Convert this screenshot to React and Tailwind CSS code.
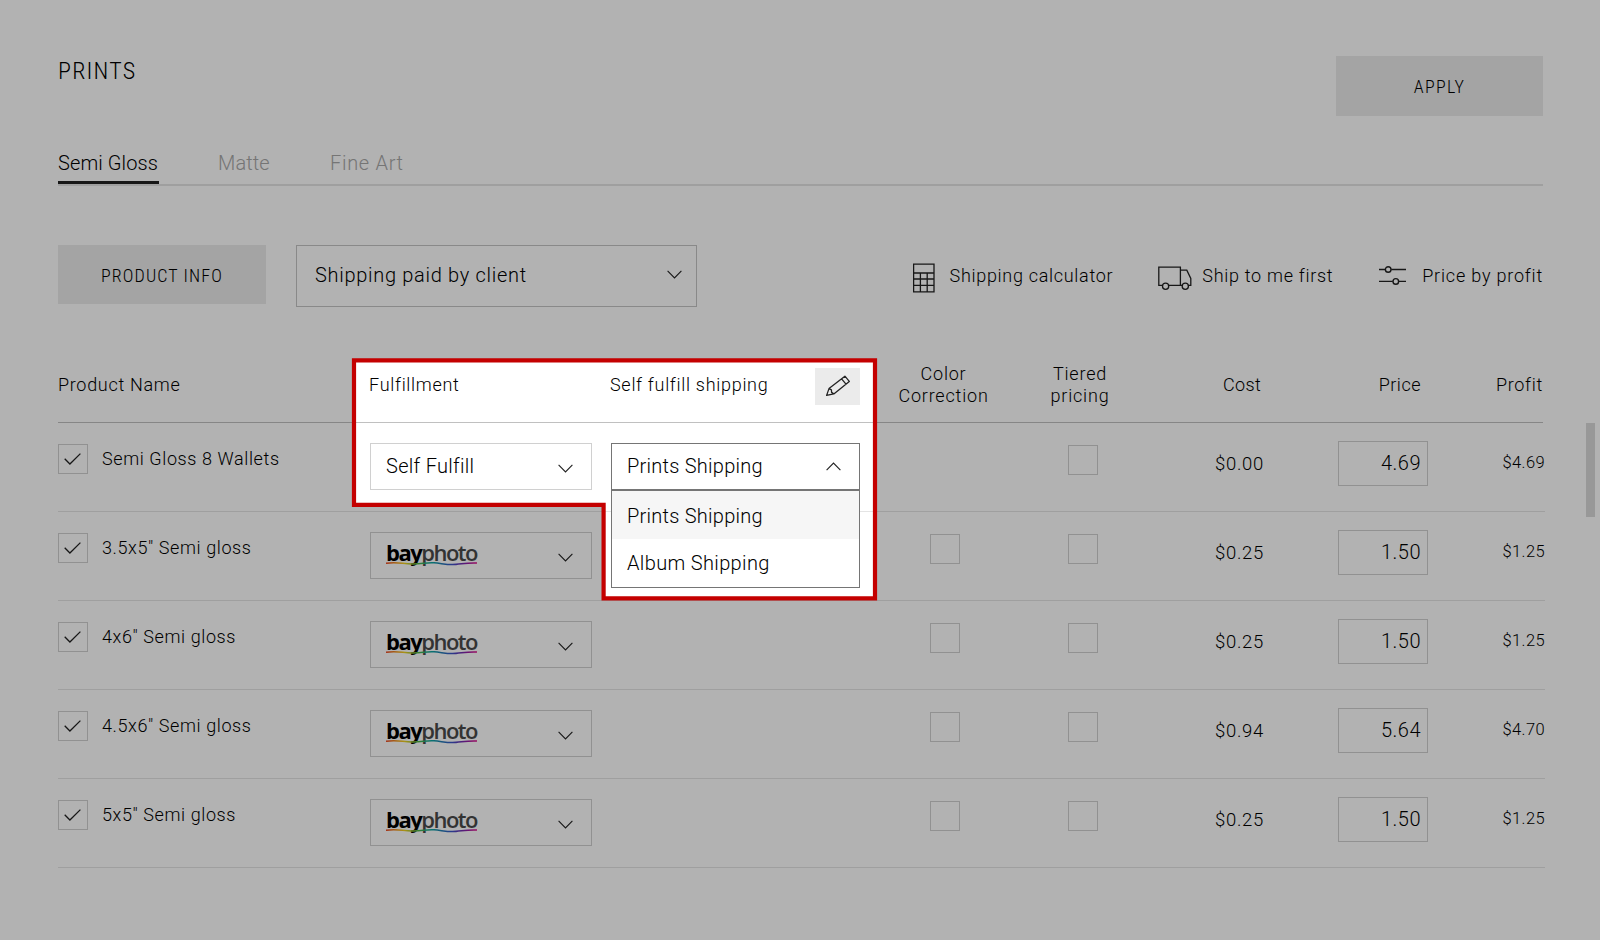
import React from 'react';

const products = [
  { name: 'Semi Gloss 8 Wallets', lab: 'self', correction: false, cost: '$0.00', price: '4.69', profit: '$4.69' },
  { name: '3.5x5" Semi gloss', lab: 'bayphoto', correction: true, cost: '$0.25', price: '1.50', profit: '$1.25' },
  { name: '4x6" Semi gloss', lab: 'bayphoto', correction: true, cost: '$0.25', price: '1.50', profit: '$1.25' },
  { name: '4.5x6" Semi gloss', lab: 'bayphoto', correction: true, cost: '$0.94', price: '5.64', profit: '$4.70' },
  { name: '5x5" Semi gloss', lab: 'bayphoto', correction: true, cost: '$0.25', price: '1.50', profit: '$1.25' },
];

const columns = 'grid grid-cols-[312px_241px_253px_162px_114px_124px_164px_117px]';

const Chevron = ({ up, className = '' }) => (
  <svg className={`h-[9px] w-[15px] shrink-0 ${className}`} viewBox="0 0 15 9" fill="none" stroke="#222" strokeWidth="1.1">
    <path d={up ? 'M.6 8.2 7.5 1l6.9 7.2' : 'M.6.8 7.5 8l6.9-7.2'} />
  </svg>
);

const CalculatorIcon = () => (
  <svg className="mt-1 h-[30px] w-[22px]" viewBox="0 0 22 30" fill="none" stroke="#222" strokeWidth="1.3">
    <path d="M.6 1.2h20.4v27.6H.6zM.6 10h20.4M.6 16h20.4M.6 22.3h20.4M7.4 10v18.8M14.2 10v18.8" />
  </svg>
);

const TruckIcon = () => (
  <svg className="mt-1 h-6 w-[34px]" viewBox="0 0 34 24" fill="none" stroke="#222" strokeWidth="1.3">
    <path d="M4.4 19.4H.8V1.2h21.6v18.2H10.8M22.4 4.2h6.4l4 8.2v7h-2.4M22.4 19.4h1.8" />
    <circle cx="7.6" cy="20.2" r="3.1" />
    <circle cx="27.3" cy="20.2" r="3.1" />
  </svg>
);

const SlidersIcon = () => (
  <svg className="-mt-0.5 h-[19px] w-[27px]" viewBox="0 0 27 19" fill="none" stroke="#222" strokeWidth="1.4">
    <path d="M0 3.5h6.2M12.2 3.5H27M0 15.4h13.8M19.8 15.4H27" />
    <circle cx="9.2" cy="3.5" r="2.8" />
    <circle cx="16.8" cy="15.4" r="2.8" />
  </svg>
);

const PencilIcon = () => (
  <svg className="-mt-0.5 h-[22px] w-6" viewBox="0 0 24 22" fill="none" stroke="#222" strokeWidth="1.3" strokeLinejoin="round">
    <path d="M.6 20.4l2.4-6.8L18.9 1.2l4.4 5.2L7.8 18.9zM3 13.6l2.4 1.2.2 2.6 2.2 1.5M15.6 3.8l4.4 5.3" />
  </svg>
);

const Checkbox = ({ checked }) => (
  <span className="flex size-[30px] shrink-0 items-center justify-center border border-[#d0d0d0]">
    {checked && (
      <svg className="-ml-0.5 h-3 w-[17px]" viewBox="0 0 17 12" fill="none" stroke="#222" strokeWidth="1.3">
        <path d="M.7 5.8 5.9 11 16.4.6" />
      </svg>
    )}
  </span>
);

const BayPhotoLogo = () => (
  <span className="relative -mt-[7px] block h-6 w-[91px] whitespace-nowrap font-['Open_Sans',sans-serif] text-[22px] leading-6 tracking-[-1.5px] text-[#4a4a4a]">
    <span className="font-bold text-black">bay</span>
    <span className="font-semibold">photo</span>
    <svg className="absolute left-0 top-[21px] h-1.5 w-[91px]" viewBox="0 0 91 6" fill="none">
      <defs>
        <linearGradient id="rainbow">
          <stop offset="0" stopColor="#e8431f" />
          <stop offset=".2" stopColor="#f5d21f" />
          <stop offset=".36" stopColor="#4cb748" />
          <stop offset=".5" stopColor="#0ea5a0" />
          <stop offset=".72" stopColor="#3a55c8" />
          <stop offset=".88" stopColor="#8a1fa8" />
          <stop offset="1" stopColor="#e0108a" />
        </linearGradient>
      </defs>
      <path d="M0 2.2C12 .6 16 2.8 26 3S40 1.2 48 1.8s14 2.4 22 1.6 12-1.8 21-1.4" stroke="url(#rainbow)" strokeWidth="1.6" />
    </svg>
  </span>
);

const FulfillmentSelect = ({ lab }) => (
  <div className="mt-5 flex h-[47px] w-[222px] items-center justify-between border border-[#d0d0d0] pl-[15px] pr-[18px]">
    {lab === 'self' ? (
      <span className="-mt-0.5 text-xl tracking-[0.3px]">Self Fulfill</span>
    ) : (
      <BayPhotoLogo />
    )}
    <Chevron className="mt-1" />
  </div>
);

const ShippingSelect = () => (
  <div className="relative mt-5 w-[249px] text-xl tracking-[0.25px]">
    <div className="flex h-[47px] items-center justify-between border border-[#757575] bg-white pl-[15px] pr-[18px]">
      <span className="-mt-0.5">Prints Shipping</span>
      <Chevron up />
    </div>
    <ul className="absolute left-0 top-[46px] z-10 w-full border border-t-2 border-[#757575] bg-white">
      <li className="flex h-12 items-center bg-[#f6f6f6] px-[15px] pt-0.5">Prints Shipping</li>
      <li className="flex h-12 items-center px-[15px] tracking-[0.35px]">Album Shipping</li>
    </ul>
  </div>
);

const ProductRow = ({ product }) => (
  <div className={`${columns} h-[89px] items-start border-b border-[#e4e4e4]`}>
    <div className="mt-[21px] flex items-center gap-3.5">
      <Checkbox checked />
      <span className="tracking-[0.6px]">{product.name}</span>
    </div>
    <FulfillmentSelect lab={product.lab} />
    <div>{product.lab === 'self' && <ShippingSelect />}</div>
    <div className="mt-[22px] flex justify-center pr-px">{product.correction && <Checkbox />}</div>
    <div className="mt-[22px] flex justify-center">
      <Checkbox />
    </div>
    <div className="mt-[27px] text-right text-[18.5px] tracking-[0.7px]">{product.cost}</div>
    <div className="mt-[18px] flex h-[45px] w-[90px] items-center justify-end justify-self-end border border-[#d0d0d0] pb-0.5 pr-1.5 text-xl tracking-[0.5px]">
      {product.price}
    </div>
    <div className="mt-[26px] text-right text-[16.5px] tracking-[0.4px]">{product.profit}</div>
  </div>
);

// Dims the page except for the area around the shipping menu
const Spotlight = () => (
  <svg className="pointer-events-none absolute inset-0 z-20 h-[940px] w-[1600px]" viewBox="0 0 1600 940" fill="none">
    <path fillRule="evenodd" fill="#000" fillOpacity=".3" d="M0 0H1600V940H0ZM354 360.4H875V598.4H603.6V504.8H354Z" />
    <path d="M354 360.4H875V598.4H603.6V504.8H354Z" stroke="#c40000" strokeWidth="4.2" />
  </svg>
);

const App = () => {
  return (
    <div className="relative h-[940px] w-[1600px] overflow-hidden bg-white pl-[58px] font-[Roboto,sans-serif] text-lg font-light leading-7 text-black">
      <header className="flex w-[1485px] justify-between pt-14">
        <h1 className="-mt-px text-2xl font-stretch-condensed tracking-[1.2px]">PRINTS</h1>
        <button className="h-[60px] w-[207px] bg-[#ebebeb] pt-0.5 font-stretch-condensed tracking-[1.3px]">APPLY</button>
      </header>

      <nav className="mt-8 flex h-[38px] w-[1485px] border-b-2 border-[#e4e4e4] text-xl text-[#a8a8a8]">
        <span className="h-9 w-[101px] whitespace-nowrap border-b-[3px] border-[#222] pt-px tracking-[0.1px] text-black">Semi Gloss</span>
        <span className="ml-[59px] w-[112px] pt-px tracking-[0.1px]">Matte</span>
        <span className="pt-px tracking-[0.7px]">Fine Art</span>
      </nav>

      <div className="mt-[59px] flex w-[1485px] items-start">
        <button className="h-[59px] w-52 bg-[#ebebeb] pt-0.5 font-stretch-condensed tracking-[1.1px]">PRODUCT INFO</button>
        <div className="ml-[30px] flex h-[62px] w-[401px] items-center justify-between border border-[#c4c4c4] pl-[18px] pr-3.5">
          <span className="-mt-0.5 text-xl tracking-[0.7px]">Shipping paid by client</span>
          <Chevron className="-mt-1" />
        </div>
        <div className="ml-auto flex h-[62px] items-center tracking-[0.7px]">
          <CalculatorIcon />
          <span className="ml-[15px]">Shipping calculator</span>
          <span className="ml-[45px]"><TruckIcon /></span>
          <span className="ml-2.5">Ship to me first</span>
          <span className="ml-[46px]"><SlidersIcon /></span>
          <span className="ml-4 tracking-[0.8px]">Price by profit</span>
        </div>
      </div>

      <div className="mt-[38px] flex items-start">
        <div className="w-[1487px]">
          <div className={`${columns} h-[78px] w-[1485px] items-center border-b border-[#c0c0c0] pt-0.5 tracking-[0.7px]`}>
            <span>Product Name</span>
            <span className="-ml-px">Fulfillment</span>
            <div className="-ml-px flex w-[250px] items-center justify-between">
              <span>Self fulfill shipping</span>
              <button className="mt-1 flex h-[37px] w-[45px] items-center justify-center bg-[#ebebeb]">
                <PencilIcon />
              </button>
            </div>
            <span className="pr-[3px] text-center leading-[22px] tracking-[0.8px]">Color<br />Correction</span>
            <span className="pr-1.5 text-center leading-[22px] tracking-[0.8px]">Tiered<br />pricing</span>
            <span className="pr-[3px] text-right tracking-[0.3px]">Cost</span>
            <span className="pr-[7px] text-right tracking-[0.5px]">Price</span>
            <span className="pr-0.5 text-right">Profit</span>
          </div>
          {products.map((product) => (
            <ProductRow key={product.name} product={product} />
          ))}
        </div>
        <div className="ml-[41px] mt-[78px] h-[94px] w-[9px] bg-[#dadada]" />
      </div>

      <Spotlight />
    </div>
  );
};

export default App;
